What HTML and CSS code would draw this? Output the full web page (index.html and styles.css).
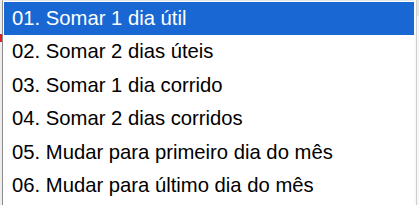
FILE: index.html
```html
<!DOCTYPE html>
<html lang="pt-BR">
<head>
    <meta charset="UTF-8">
    <meta name="viewport" content="width=device-width, initial-scale=1.0">
    <title>Opções de data</title>
    <link rel="stylesheet" href="styles.css">
</head>
<body>
    <div class="frame">
        <div class="gutter"><span class="mark"></span></div>
        <ul class="options">
            <li class="option selected">01. Somar 1 dia útil</li>
            <li class="option">02. Somar 2 dias úteis</li>
            <li class="option">03. Somar 1 dia corrido</li>
            <li class="option">04. Somar 2 dias corridos</li>
            <li class="option">05. Mudar para primeiro dia do mês</li>
            <li class="option">06. Mudar para último dia do mês</li>
        </ul>
        <div class="side"></div>
    </div>
</body>
</html>
```

FILE: styles.css
```css
body {
    margin: 0;
    padding: 0;
    background-color: #fff;
    overflow: hidden;
}
.frame {
    display: flex;
    width: 419px;
    height: 205px;
}
.gutter {
    width: 2px;
    background-color: #eee;
    position: relative;
}
.mark {
    position: absolute;
    left: 0;
    top: 34px;
    width: 2px;
    height: 8px;
    background-color: #e02020;
}
.options {
    list-style: none;
    margin: 0;
    padding: 1px 0 0 1px;
    width: 410px;
    border-left: 1px solid #8c8c8c;
    border-top: 1px solid #e6e6e6;
    background-color: #fff;
}
.option {
    height: 33.4px;
    line-height: 33.4px;
    padding-left: 8px;
    font-family: "Liberation Sans", Arial, sans-serif;
    font-size: 20.25px;
    color: #000;
    white-space: nowrap;
}
.selected {
    background-color: #1967d2;
    color: #fff;
}
.side {
    flex: 1;
    border-left: 2px solid #fafafa;
    box-shadow: inset 1px 0 0 #cfcfcf;
    background: linear-gradient(#e8e8e0 0, #e8e8e0 16px, #f7f7f7 16px);
}
```
